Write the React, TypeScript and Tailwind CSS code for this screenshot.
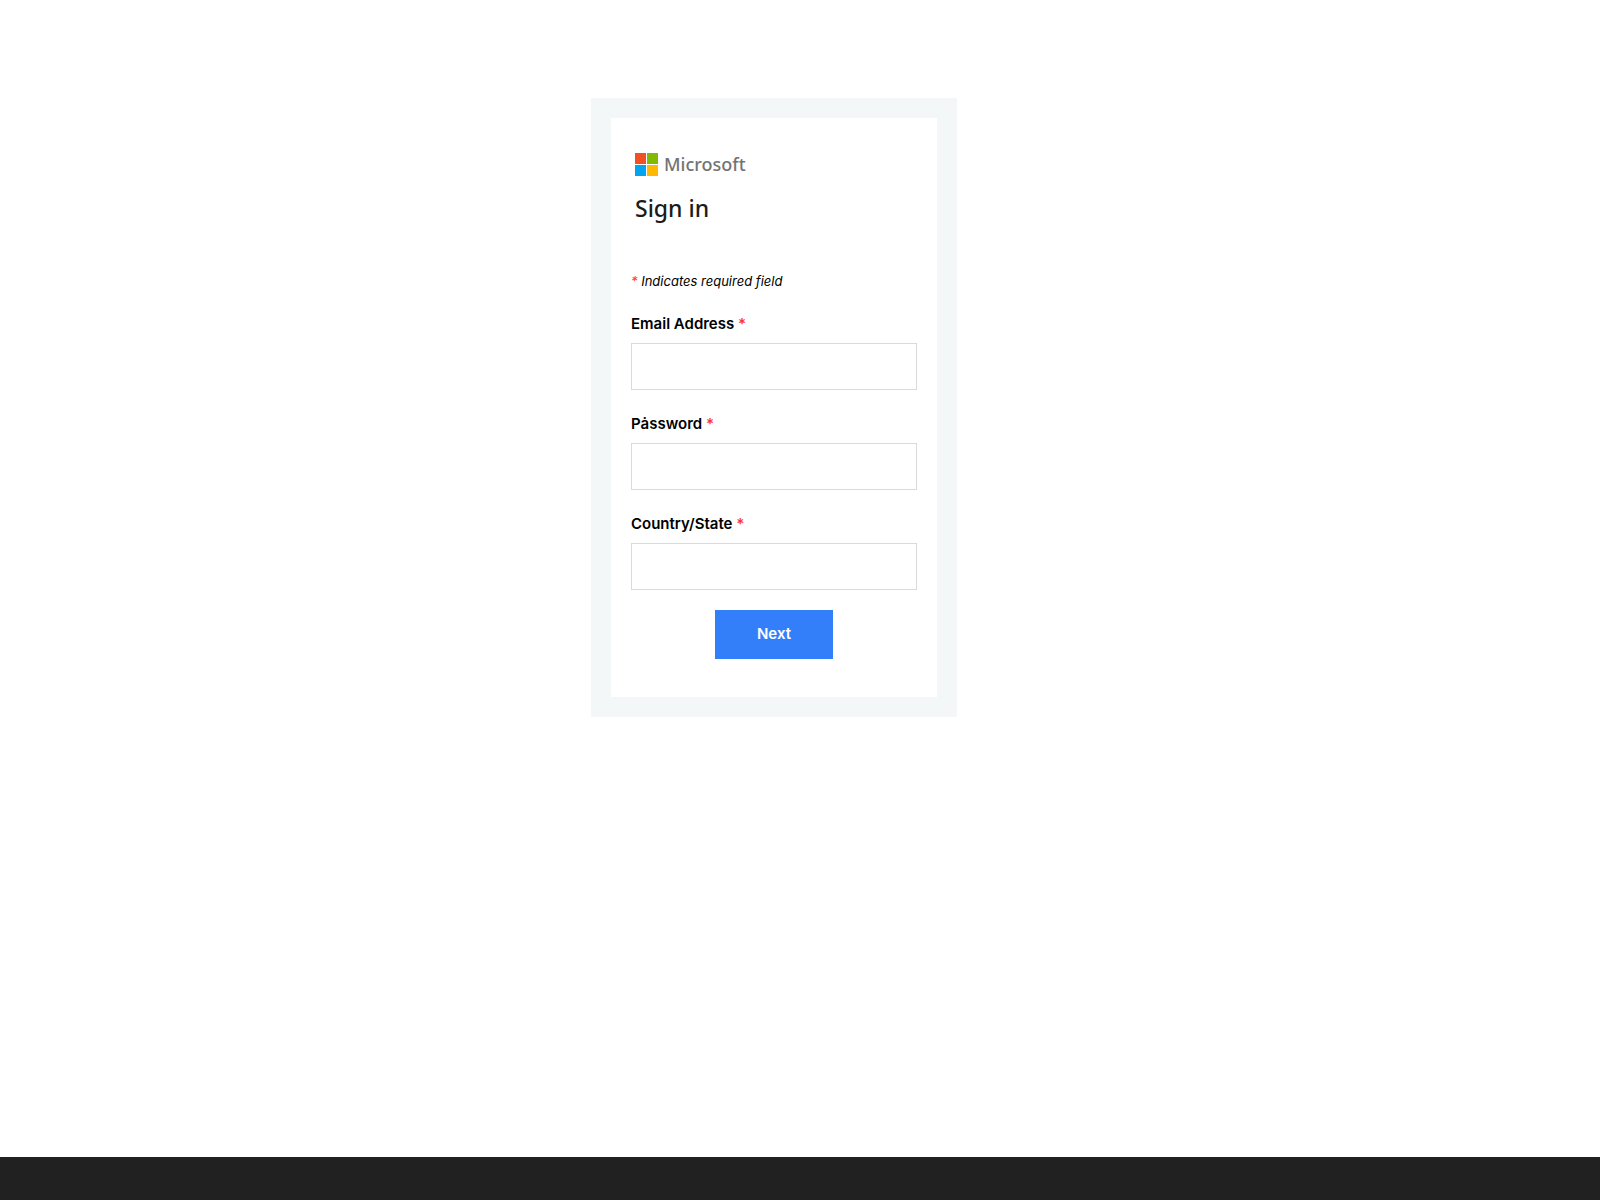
import React from "react";

const fields = [
  { id: "email", label: "Email Address", type: "text" },
  { id: "password", label: "Pȧssword", type: "password" },
  { id: "country", label: "Country/State", type: "text" },
];

function Logo() {
  return (
    <div className="flex items-center gap-[6px]">
      <svg width="23" height="23" viewBox="0 0 23 23" aria-hidden="true">
        <path fill="#f25022" d="M0 0h11v11H0z" />
        <path fill="#80ba01" d="M12 0h11v11H12z" />
        <path fill="#02a4ef" d="M0 12h11v11H0z" />
        <path fill="#ffb902" d="M12 12h11v11H12z" />
      </svg>
      <span className="font-['Noto_Sans','Open_Sans',sans-serif] text-[18px] leading-[23px] font-medium text-[#737373]">
        Microsoft
      </span>
    </div>
  );
}

export default function App() {
  // sends the form
  const handleSubmit = (e: React.FormEvent) => {
    e.preventDefault();
  };

  return (
    <div className="flex min-h-screen flex-col bg-white font-['Inter',sans-serif] text-black">
      <main className="flex flex-1 flex-col items-center pt-[98px] pr-[52px]">
        <div className="w-full max-w-[366px] bg-[#f3f7f8] p-5">
          <form onSubmit={handleSubmit} className="flex flex-col bg-white px-5 pt-[35px] pb-[38px]">
            <div className="px-1">
              <Logo />
              <h1 className="mt-4 font-['Noto_Sans','Open_Sans',sans-serif] text-[23px] leading-8 font-medium text-[#1b1b1b]">
                Sign in
              </h1>
            </div>
            <p className="mt-[45px] text-[13px] leading-6 italic">
              <span className="text-[#ff3333]">*</span> Indicates required field
            </p>
            <div className="mt-[18px] flex flex-col gap-[21px]">
              {fields.map((field) => (
                <div key={field.id} className="flex flex-col gap-[6px]">
                  <label htmlFor={field.id} className="text-[15px] leading-[26px] font-semibold">
                    {field.label} <span className="text-[#ff3333]">*</span>
                  </label>
                  <input
                    id={field.id}
                    type={field.type}
                    className="h-[47px] w-full border border-[#dadada] bg-white px-3 text-[15px] outline-none"
                  />
                </div>
              ))}
            </div>
            <button
              type="submit"
              className="mt-5 h-[49px] w-[118px] cursor-pointer self-center bg-[#337ffa] text-[15px] font-semibold text-white"
            >
              Next
            </button>
          </form>
        </div>
      </main>
      <footer className="h-[43px] bg-[#212121]" />
    </div>
  );
}
